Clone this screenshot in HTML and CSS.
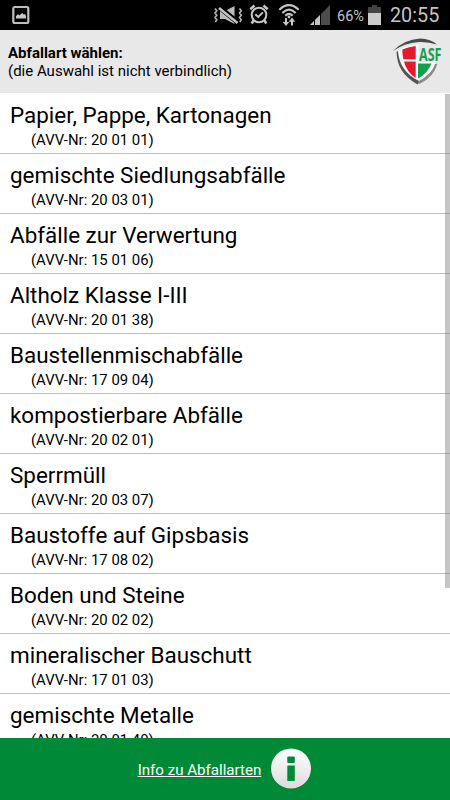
FILE: index.html
```
<!DOCTYPE html>
<html lang="de">
<head>
  <meta charset="UTF-8" />
  <meta name="viewport" content="width=device-width, initial-scale=1.0" />
  <title>ASF – Abfallart wählen</title>
  <link rel="stylesheet" href="styles.css">
</head>

<body>
  <div class="screen">
    <!-- Statusleiste -->
    <div class="statusbar">
      <svg class="icon-picture" width="18" height="20" viewBox="0 0 18 20">
        <rect x="1.3" y="2" width="15" height="16" rx="1.5" fill="none" stroke="#bdbdbd" stroke-width="2.2" />
        <path d="M4 13.5V11l2-1.8 1.6 1 2.6-2.200 1.600 1.500 1.200-.6 1 2v2.600z" fill="#c8c8c8" />
      </svg>
      <svg class="icon-mute" width="30" height="20" viewBox="0 0 30 20">
        <path d="M6 6h5L20.500 1v18L11 14H6z" fill="#bdbdbd" />
        <path d="M4.500 1.500L25 18.500" stroke="#000" stroke-width="5" />
        <path d="M5 3L23.500 18" stroke="#c4c4c4" stroke-width="2.400" />
        <path d="M1 3.500l1.800 2.200L1 8l1.800 2.200L1 12.500l1.800 2.200L1.300 17M25.500 3.500l1.800 2.200L25.500 8l1.800 2.200-1.800 2.300 1.800 2.200-1.500 2.300" fill="none" stroke="#b4b4b4" stroke-width="1.600" />
      </svg>
      <svg class="icon-alarm" width="20" height="21" viewBox="0 0 20 21">
        <circle cx="10" cy="11" r="7.300" fill="none" stroke="#c4c4c4" stroke-width="2.100" />
        <path d="M1.300 5.200L5.500 1.500M18.700 5.200L14.500 1.500M4.500 16.500L2.700 19.500M15.500 16.500l1.800 3" stroke="#c4c4c4" stroke-width="2.500" />
        <path d="M6.300 10.200l3 2.800 4.600-4.600" fill="none" stroke="#c4c4c4" stroke-width="1.900" />
      </svg>
      <svg class="icon-wifi" width="22" height="23" viewBox="0 0 22 23">
        <path d="M1.300 5.700Q11-3.500 20.700 5.700M4.300 8.900Q11 2.500 17.700 8.900M7.300 11.800Q11 8 14.700 11.800" fill="none" stroke="#c4c4c4" stroke-width="2.100" />
        <circle cx="11" cy="13" r="1.400" fill="#c4c4c4" />
        <path d="M8 14v6M14 21.500v-6" stroke="#c4c4c4" stroke-width="2" />
        <path d="M4.700 18h6.600L8 22zM10.700 17.700h6.600L14 13.500z" fill="#c4c4c4" />
      </svg>
      <svg class="icon-signal" width="20" height="20" viewBox="0 0 20 20">
        <path d="M0 20L20 0v20z" fill="#4d4d4d" />
        <path d="M0 20L10 10v10z" fill="#c4c4c4" />
        <path d="M4.500 20v-6M10.500 20V9" stroke="#000" stroke-width="1" />
      </svg>
      <span class="battery-text">66%</span>
      <svg class="icon-battery" width="13" height="20" viewBox="0 0 13 20">
        <path d="M4 0h5v2h4v18H0V2h4z" fill="#444" />
        <path d="M0 8h13v12H0z" fill="#cbcbcb" />
      </svg>
      <span class="clock">20:55</span>
    </div>

    <header class="header">
      <div class="header-text">
        <strong>Abfallart wählen:</strong><br>
        (die Auswahl ist nicht verbindlich)
      </div>
      <svg class="logo" width="50" height="48" viewBox="0 0 50 48">
        <path d="M1 13Q12 1.500 28 .5Q39 1 45 6.500Q36 3.500 27 4Q12 5 1 13z" fill="#4a4a4a" />
        <path d="M7 13C7.500 26 12 37 25 43.500C37 38 42 31 43.500 25.500" fill="none" stroke="#fff" stroke-width="3" />
        <path d="M4.500 14C5 28 11 38 25.500 46.500L28 43.500C13 36 7 26 6 13z" fill="#555" />
        <path d="M27.500 46Q42 39 45.500 25.500L43 26Q40 36 26 43.500z" fill="#8a8a8a" />
        <!-- Wappen mit weißem Kreuz -->
        <path d="M9 11Q17 7 25.500 6.500V42Q9 33 9 11z" fill="#fff" />
        <path d="M25 6.500h1.500V24H42Q39 36 25 42z" fill="#fff" />
        <path d="M10.300 11.500Q17 8.500 23.700 8v13.200H11.300Q10.300 16 10.300 11.500z" fill="#e8182c" />
        <path d="M12 23.500h11.700V40Q14.500 34 12 23.500z" fill="#e8182c" />
        <path d="M26 25.500h13.500Q36 35 26 40.500z" fill="#12a04b" />
        <text x="27" y="23" textLength="22.500" lengthAdjust="spacingAndGlyphs">ASF</text>
      </svg>
    </header>

    <main class="list">
      <div class="item"><div class="name">Papier, Pappe, Kartonagen</div><div class="avv">(AVV-Nr: 20 01 01)</div></div>
      <div class="item"><div class="name">gemischte Siedlungsabfälle</div><div class="avv">(AVV-Nr: 20 03 01)</div></div>
      <div class="item"><div class="name">Abfälle zur Verwertung</div><div class="avv">(AVV-Nr: 15 01 06)</div></div>
      <div class="item"><div class="name">Altholz Klasse I-III</div><div class="avv">(AVV-Nr: 20 01 38)</div></div>
      <div class="item"><div class="name">Baustellenmischabfälle</div><div class="avv">(AVV-Nr: 17 09 04)</div></div>
      <div class="item"><div class="name">kompostierbare Abfälle</div><div class="avv">(AVV-Nr: 20 02 01)</div></div>
      <div class="item"><div class="name">Sperrmüll</div><div class="avv">(AVV-Nr: 20 03 07)</div></div>
      <div class="item"><div class="name">Baustoffe auf Gipsbasis</div><div class="avv">(AVV-Nr: 17 08 02)</div></div>
      <div class="item"><div class="name">Boden und Steine</div><div class="avv">(AVV-Nr: 20 02 02)</div></div>
      <div class="item"><div class="name">mineralischer Bauschutt</div><div class="avv">(AVV-Nr: 17 01 03)</div></div>
      <div class="item"><div class="name">gemischte Metalle</div><div class="avv">(AVV-Nr: 20 01 40)</div></div>
      <div class="scrollbar"></div>
    </main>

    <footer class="footer">
      <a href="#">Info zu Abfallarten</a>
      <svg width="42" height="42" viewBox="0 0 42 42">
        <defs>
          <linearGradient id="knob" x1="0" y1="0" x2="0" y2="1">
            <stop offset="0" stop-color="#fff" />
            <stop offset="1" stop-color="#dcdcdc" />
          </linearGradient>
        </defs>
        <circle cx="21" cy="21.500" r="20" fill="#00702c" opacity=".5" />
        <circle cx="21" cy="20.500" r="20" fill="url(#knob)" />
        <rect x="17.300" y="8.500" width="7.500" height="6.500" rx="1" fill="#008a38" />
        <path d="M18.300 17.500h6.500V33h-7.500V18.500q0-1 1-1z" fill="#008a38" />
      </svg>
    </footer>
  </div>
</body>
</html>
```
FILE: styles.css
```
:root {
  --asf-green: #008a38;
  --header-bg: #e8e8e8;
  --line: #b5c4b5;
}

* {
  box-sizing: border-box;
}

body {
  margin: 0;
  font-family: Roboto, "Liberation Sans", sans-serif;
  background: white;
  color: #000;
}

.screen {
  display: flex;
  flex-direction: column;
  height: 800px;
  overflow: hidden;
}

.statusbar {
  display: flex;
  flex: none;
  align-items: flex-start;
  height: 30px;
  background: #000;
  color: #c4c4c4;
}

.statusbar svg {
  flex: none;
}

.icon-picture {
  margin: 5px 0 0 12px;
}

.icon-mute {
  margin: 5px 0 0 184px;
}

.icon-alarm {
  margin: 4px 0 0 5px;
}

.icon-wifi {
  margin: 4px 0 0 9px;
}

.icon-signal {
  margin: 5px 0 0 10px;
}

.battery-text {
  width: 31px;
  margin-left: 7px;
  font-size: 14.5px;
  line-height: 33px;
}

.icon-battery {
  margin: 5px 0 0;
}

.clock {
  margin-left: 9px;
  font-size: 19.8px;
  line-height: 32px;
}

.header {
  display: flex;
  flex: none;
  justify-content: space-between;
  height: 63px;
  padding: 8px 8px 0 8px;
  background: var(--header-bg);
}

.header-text {
  padding-top: 6px;
  font-size: 15px;
  line-height: 18px;
}

.logo {
  overflow: visible;
}

.logo text {
  font-family: "Open Sans", sans-serif;
  font-size: 17px;
  font-weight: 700;
  fill: #12a04b;
}

.list {
  position: relative;
  flex: 1;
  padding-top: 1px;
  overflow: hidden;
}

.item {
  height: 60px;
  padding: 8px 10px 0;
  border-bottom: 1px solid var(--line);
}

.name {
  font-size: 22.45px;
  line-height: 27px;
}

.avv {
  padding-left: 21px;
  font-size: 14.9px;
  line-height: 23px;
}

/* liegt über der Liste */
.scrollbar {
  position: absolute;
  top: 1px;
  right: 0;
  width: 5px;
  height: 494px;
  background: rgba(128, 128, 128, 0.45);
}

.footer {
  display: flex;
  flex: none;
  align-items: center;
  justify-content: center;
  gap: 9px;
  height: 62px;
  background: var(--asf-green);
}

.footer a {
  padding-top: 1px;
  font-size: 15.1px;
  color: white;
  text-decoration: underline;
}
```
